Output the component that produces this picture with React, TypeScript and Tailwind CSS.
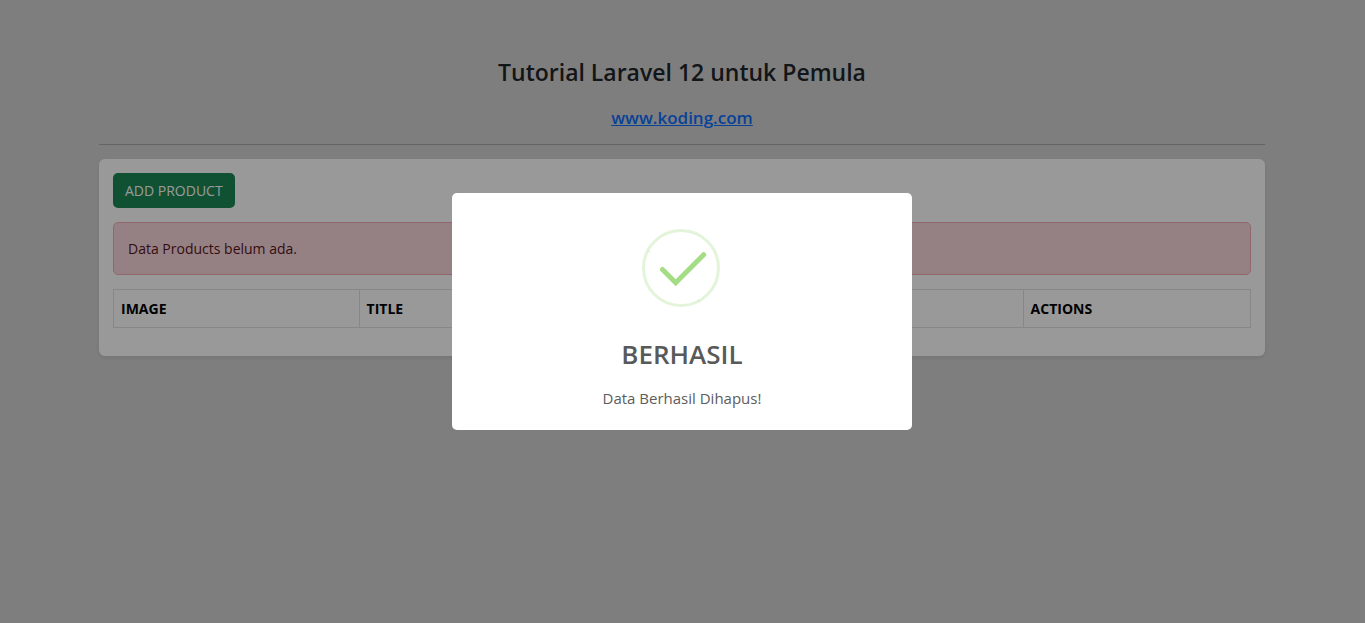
function SuccessIcon() {
  return (
    <svg width="80" height="80" viewBox="0 0 80 80" fill="none" aria-hidden="true">
      <circle cx="39" cy="40" r="37.5" stroke="#e4f4db" strokeWidth="3" />
      <path d="M5.5 22l2.5 2.5M56 72l2.5 2.5" stroke="#c9e5bb" strokeWidth="0.7" />
      <path
        d="M20.5 41.5L33.7 54.7L61.7 26.7"
        stroke="#a5dc86"
        strokeWidth="5"
        strokeLinecap="round"
        strokeLinejoin="miter"
      />
    </svg>
  );
}

function SuccessDialog() {
  return (
    <div className="fixed inset-0 flex items-center justify-center bg-black/40 pr-px">
      <div
        role="dialog"
        aria-modal="true"
        aria-labelledby="dialog-title"
        aria-describedby="dialog-text"
        className="flex w-[460px] flex-col items-center rounded-[5px] bg-white pt-[35px] pb-5"
      >
        <SuccessIcon />
        <h2 id="dialog-title" className="mt-7 text-[26px] leading-9 font-semibold text-[#595959]">
          BERHASIL
        </h2>
        <p id="dialog-text" className="mt-3.5 text-[15px] leading-6 text-[#5c5c5c]">
          Data Berhasil Dihapus!
        </p>
      </div>
    </div>
  );
}

export default function App() {
  return (
    <div className="min-h-screen bg-[#d3d3d3] pr-px font-['Open_Sans','Noto_Sans',sans-serif] text-sm text-[#212529]">
      <main className="mx-auto max-w-[1166px] pt-14">
        <header className="flex flex-col items-center border-b border-[#a8a8a8] pb-3.5">
          <h1 className="text-[23px] leading-8 font-semibold">Tutorial Laravel 12 untuk Pemula</h1>
          <a
            href="#koding"
            className="mt-[18px] text-[17px] leading-6 font-semibold text-[#0d6efd] underline decoration-1"
          >
            www.koding.com
          </a>
        </header>

        <section className="mt-3.5 rounded-md bg-white px-3.5 pt-3.5 pb-7 shadow-[0_2px_4px_rgba(0,0,0,0.08)]">
          <button
            type="button"
            className="h-[35px] rounded-[5px] bg-[#198754] px-3 text-white"
          >
            ADD PRODUCT
          </button>

          <div
            role="alert"
            className="mt-3.5 rounded-[5px] border border-[#f1aeb5] bg-[#f8d7da] px-3.5 py-[15px] leading-[21px] text-[#58151c]"
          >
            Data Products belum ada.
          </div>

          <table className="mt-3.5 w-full table-fixed border-collapse text-left text-black">
            <thead>
              <tr>
                <th scope="col" className="w-[21.6%] border border-[#dee2e6] px-[7px] py-2 leading-[21px]">
                  IMAGE
                </th>
                <th scope="col" className="border border-[#dee2e6] px-[7px] py-2 leading-[21px]">
                  TITLE
                </th>
                <th scope="col" className="w-1/5 border border-[#dee2e6] px-[7px] py-2 leading-[21px]">
                  ACTIONS
                </th>
              </tr>
            </thead>
          </table>
        </section>
      </main>
      <SuccessDialog />
    </div>
  );
}
